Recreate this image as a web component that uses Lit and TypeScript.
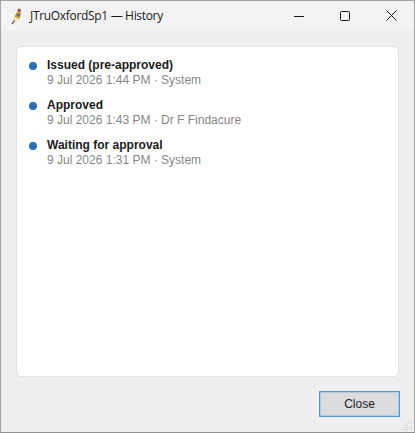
import { LitElement, html, css, svg } from "lit";
import { customElement } from "lit/decorators.js";

const events = [
  { title: "Issued (pre-approved)", meta: "9 Jul 2026 1:44 PM · System" },
  { title: "Approved", meta: "9 Jul 2026 1:43 PM · Dr F Findacure" },
  { title: "Waiting for approval", meta: "9 Jul 2026 1:31 PM · System" },
];

const gripDots: [number, number][] = [];
for (let y = 0; y < 12; y += 2) {
  for (let x = 10 - y; x < 12; x += 2) gripDots.push([x, y]);
}

@customElement("app-root")
export class AppRoot extends LitElement {
  static styles = css`
    :host { display: block; width: 415px; height: 433px; }
    * { box-sizing: border-box; }
    .window {
      width: 415px; height: 433px; display: flex; flex-direction: column;
      border: 1px solid #a3a3a3; border-bottom-color: #8f8f8f; background: #efefef;
      font-family: "Liberation Sans", Arial, sans-serif; position: relative;
    }
    .titlebar {
      height: 29px; flex: none; display: flex; align-items: center; background: #f3f3f3;
    }
    .app-icon { width: 16px; height: 18px; margin-left: 9px; flex: none; }
    .title {
      margin-left: 4px; font: 12px "Open Sans", "Noto Sans", sans-serif; color: #1a1a1a;
      letter-spacing: -0.32px;
    }
    .controls { margin-left: auto; display: flex; }
    .ctl { width: 46px; height: 29px; display: flex; align-items: center; justify-content: center; }
    .ctl svg { display: block; }
    .body { flex: 1; display: flex; flex-direction: column; padding: 16px 15px 15px; min-height: 0; }
    .card {
      flex: 1; background: #fff; border: 1px solid #e2e2e2; border-radius: 5px;
      padding: 11px 12px; display: flex; flex-direction: column; gap: 10px; min-height: 0;
    }
    .row { display: flex; align-items: flex-start; }
    .dot { width: 8px; height: 8px; border-radius: 50%; background: #2f6db5; margin-top: 4px; flex: none; }
    .text { margin-left: 10px; display: flex; flex-direction: column; }
    .ev { font-size: 12px; line-height: 15px; font-weight: 700; color: #1c1c1c; }
    .meta { font-size: 12px; line-height: 15px; color: #868686; }
    .footer { flex: none; display: flex; justify-content: flex-end; padding-top: 14px; }
    button {
      width: 81px; height: 26px; margin-right: -1px; padding: 0; background: #dcdcdc;
      border: 1px solid #4a9ce0; box-shadow: inset 0 0 0 1px #a9cbe8;
      border-radius: 0; font: 12px "Liberation Sans", Arial, sans-serif; color: #222;
    }
    .grip { position: absolute; right: 1px; bottom: 1px; width: 12px; height: 12px; }
  `;

  render() {
    return html`
      <div class="window">
        <div class="titlebar">
          <svg class="app-icon" viewBox="0 0 16 18">
            <path d="M2 15 L4.5 9.5 L9.5 12 L5 15.5 Z" fill="#ecdfc4"/>
            <path d="M2 17 L4.5 13.5" stroke="#5a4a30" stroke-width="1.2"/>
            <path d="M4.5 9.5 L7.5 4 L11 6 L9.5 12 Z" fill="#c9a21e"/>
            <path d="M7 6.5 L10.5 7 L9.5 10 L6 8.5 Z" fill="#7a5fa0"/>
            <path d="M8 1.5 L11 2.5 L10.5 5.5 L7.6 4 Z" fill="#a8403b"/>
          </svg>
          <span class="title">JTruOxfordSp1 — History</span>
          <div class="controls">
            <div class="ctl"><svg width="10" height="10" viewBox="0 0 10 10"><path d="M0 5.5H10" stroke="#1a1a1a"/></svg></div>
            <div class="ctl"><svg width="10" height="10" viewBox="0 0 10 10"><rect x=".5" y=".5" width="9" height="9" rx="1" fill="none" stroke="#1a1a1a"/></svg></div>
            <div class="ctl"><svg width="11" height="11" viewBox="0 0 11 11"><path d="M.5 .5L10.5 10.5M10.5 .5L.5 10.5" stroke="#1a1a1a"/></svg></div>
          </div>
        </div>
        <div class="body">
          <div class="card">
            ${events.map(e => html`
              <div class="row">
                <span class="dot"></span>
                <div class="text">
                  <span class="ev">${e.title}</span>
                  <span class="meta">${e.meta}</span>
                </div>
              </div>`)}
          </div>
          <div class="footer"><button>Close</button></div>
        </div>
        <svg class="grip" viewBox="0 0 12 12" fill="#cfcfcf">
          ${gripDots.map(([x, y]) => svg`<rect x=${x} y=${y} width="1" height="1"/>`)}
        </svg>
      </div>
    `;
  }
}
